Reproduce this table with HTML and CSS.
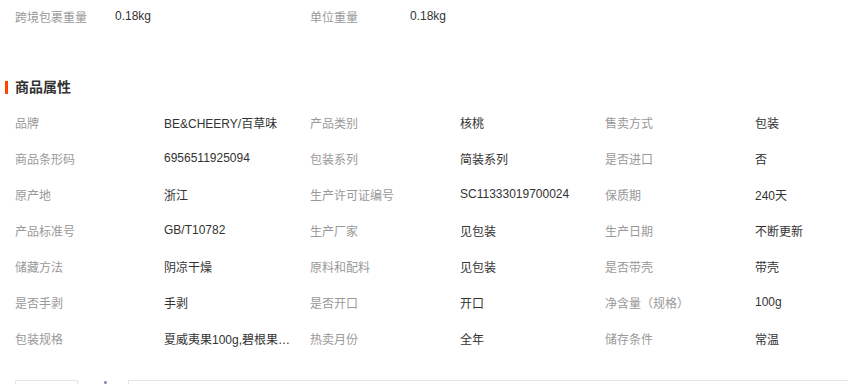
FILE: index.html
```html
<!DOCTYPE html>
<html lang="zh-CN">
<head>
<meta charset="utf-8">
<title>商品属性</title>
<link rel="stylesheet" href="styles.css">
</head>
<body>
<div class="page">
  <div class="top-row">
    <span class="t-label">跨境包裹重量</span><span class="t-value">0.18kg</span>
    <span class="t-label">单位重量</span><span class="t-value">0.18kg</span>
  </div>

  <h2 class="section-title">商品属性</h2>

  <div class="attr-grid">
    <span class="lbl">品牌</span><span class="val">BE&amp;CHEERY/百草味</span>
    <span class="lbl">产品类别</span><span class="val">核桃</span>
    <span class="lbl">售卖方式</span><span class="val">包装</span>

    <span class="lbl">商品条形码</span><span class="val">6956511925094</span>
    <span class="lbl">包装系列</span><span class="val">简装系列</span>
    <span class="lbl">是否进口</span><span class="val">否</span>

    <span class="lbl">原产地</span><span class="val">浙江</span>
    <span class="lbl">生产许可证编号</span><span class="val">SC11333019700024</span>
    <span class="lbl">保质期</span><span class="val">240天</span>

    <span class="lbl">产品标准号</span><span class="val">GB/T10782</span>
    <span class="lbl">生产厂家</span><span class="val">见包装</span>
    <span class="lbl">生产日期</span><span class="val">不断更新</span>

    <span class="lbl">储藏方法</span><span class="val">阴凉干燥</span>
    <span class="lbl">原料和配料</span><span class="val">见包装</span>
    <span class="lbl">是否带壳</span><span class="val">带壳</span>

    <span class="lbl">是否手剥</span><span class="val">手剥</span>
    <span class="lbl">是否开口</span><span class="val">开口</span>
    <span class="lbl">净含量（规格）</span><span class="val">100g</span>

    <span class="lbl">包装规格</span><span class="val">夏威夷果100g,碧根果120g,开口松子100g</span>
    <span class="lbl">热卖月份</span><span class="val">全年</span>
    <span class="lbl">储存条件</span><span class="val">常温</span>
  </div>

  <div class="tabs">
    <div class="tab-box"></div>
    <div class="tab-mark"></div>
    <div class="tab-rest"></div>
  </div>
</div>
</body>
</html>
```

FILE: styles.css
```css
html, body {
  margin: 0;
  padding: 0;
  background: #fff;
}

body {
  font-family: "Liberation Sans", "Noto Sans CJK SC", sans-serif;
  font-size: 12px;
  color: #333;
  width: 848px;
  height: 384px;
  overflow: hidden;
}

.page {
  display: flex;
  flex-direction: column;
}

.top-row {
  display: grid;
  grid-template-columns: 100px 195px 100px auto;
  padding-left: 15px;
  height: 32px;
  align-items: center;
}

.t-label {
  color: #999;
}

.t-value {
  color: #333;
}

.section-title {
  margin: 45px 0 0 0;
  padding-left: 15px;
  font-size: 14px;
  font-weight: bold;
  line-height: 20px;
  color: #333;
  position: relative;
}

.section-title::before {
  content: "";
  position: absolute;
  left: 5px;
  top: 4px;
  width: 3px;
  height: 13px;
  background: #ff4400;
}

.attr-grid {
  display: grid;
  grid-template-columns: 149px 146px 150px 145px 150px 93px;
  grid-auto-rows: 36px;
  align-items: center;
  padding-left: 15px;
  margin-top: 7px;
}

.lbl {
  color: #999;
  white-space: nowrap;
}

.val {
  color: #333;
  white-space: nowrap;
  overflow: hidden;
  text-overflow: ellipsis;
  padding-right: 18px;
}

.tabs {
  display: flex;
  margin-top: 24px;
  height: 10px;
  align-items: flex-start;
}

.tab-box {
  margin-left: 15px;
  width: 61px;
  height: 10px;
  border: 1px solid #e5e5e5;
  border-bottom: none;
}

.tab-mark {
  margin-left: 26px;
  margin-top: 1px;
  width: 3px;
  height: 3px;
  background: #8a9ab5;
  border-radius: 1px;
}

.tab-rest {
  margin-left: 21px;
  flex: 1;
  height: 10px;
  border-top: 1px solid #e5e5e5;
  border-left: 1px solid #e5e5e5;
}
```
